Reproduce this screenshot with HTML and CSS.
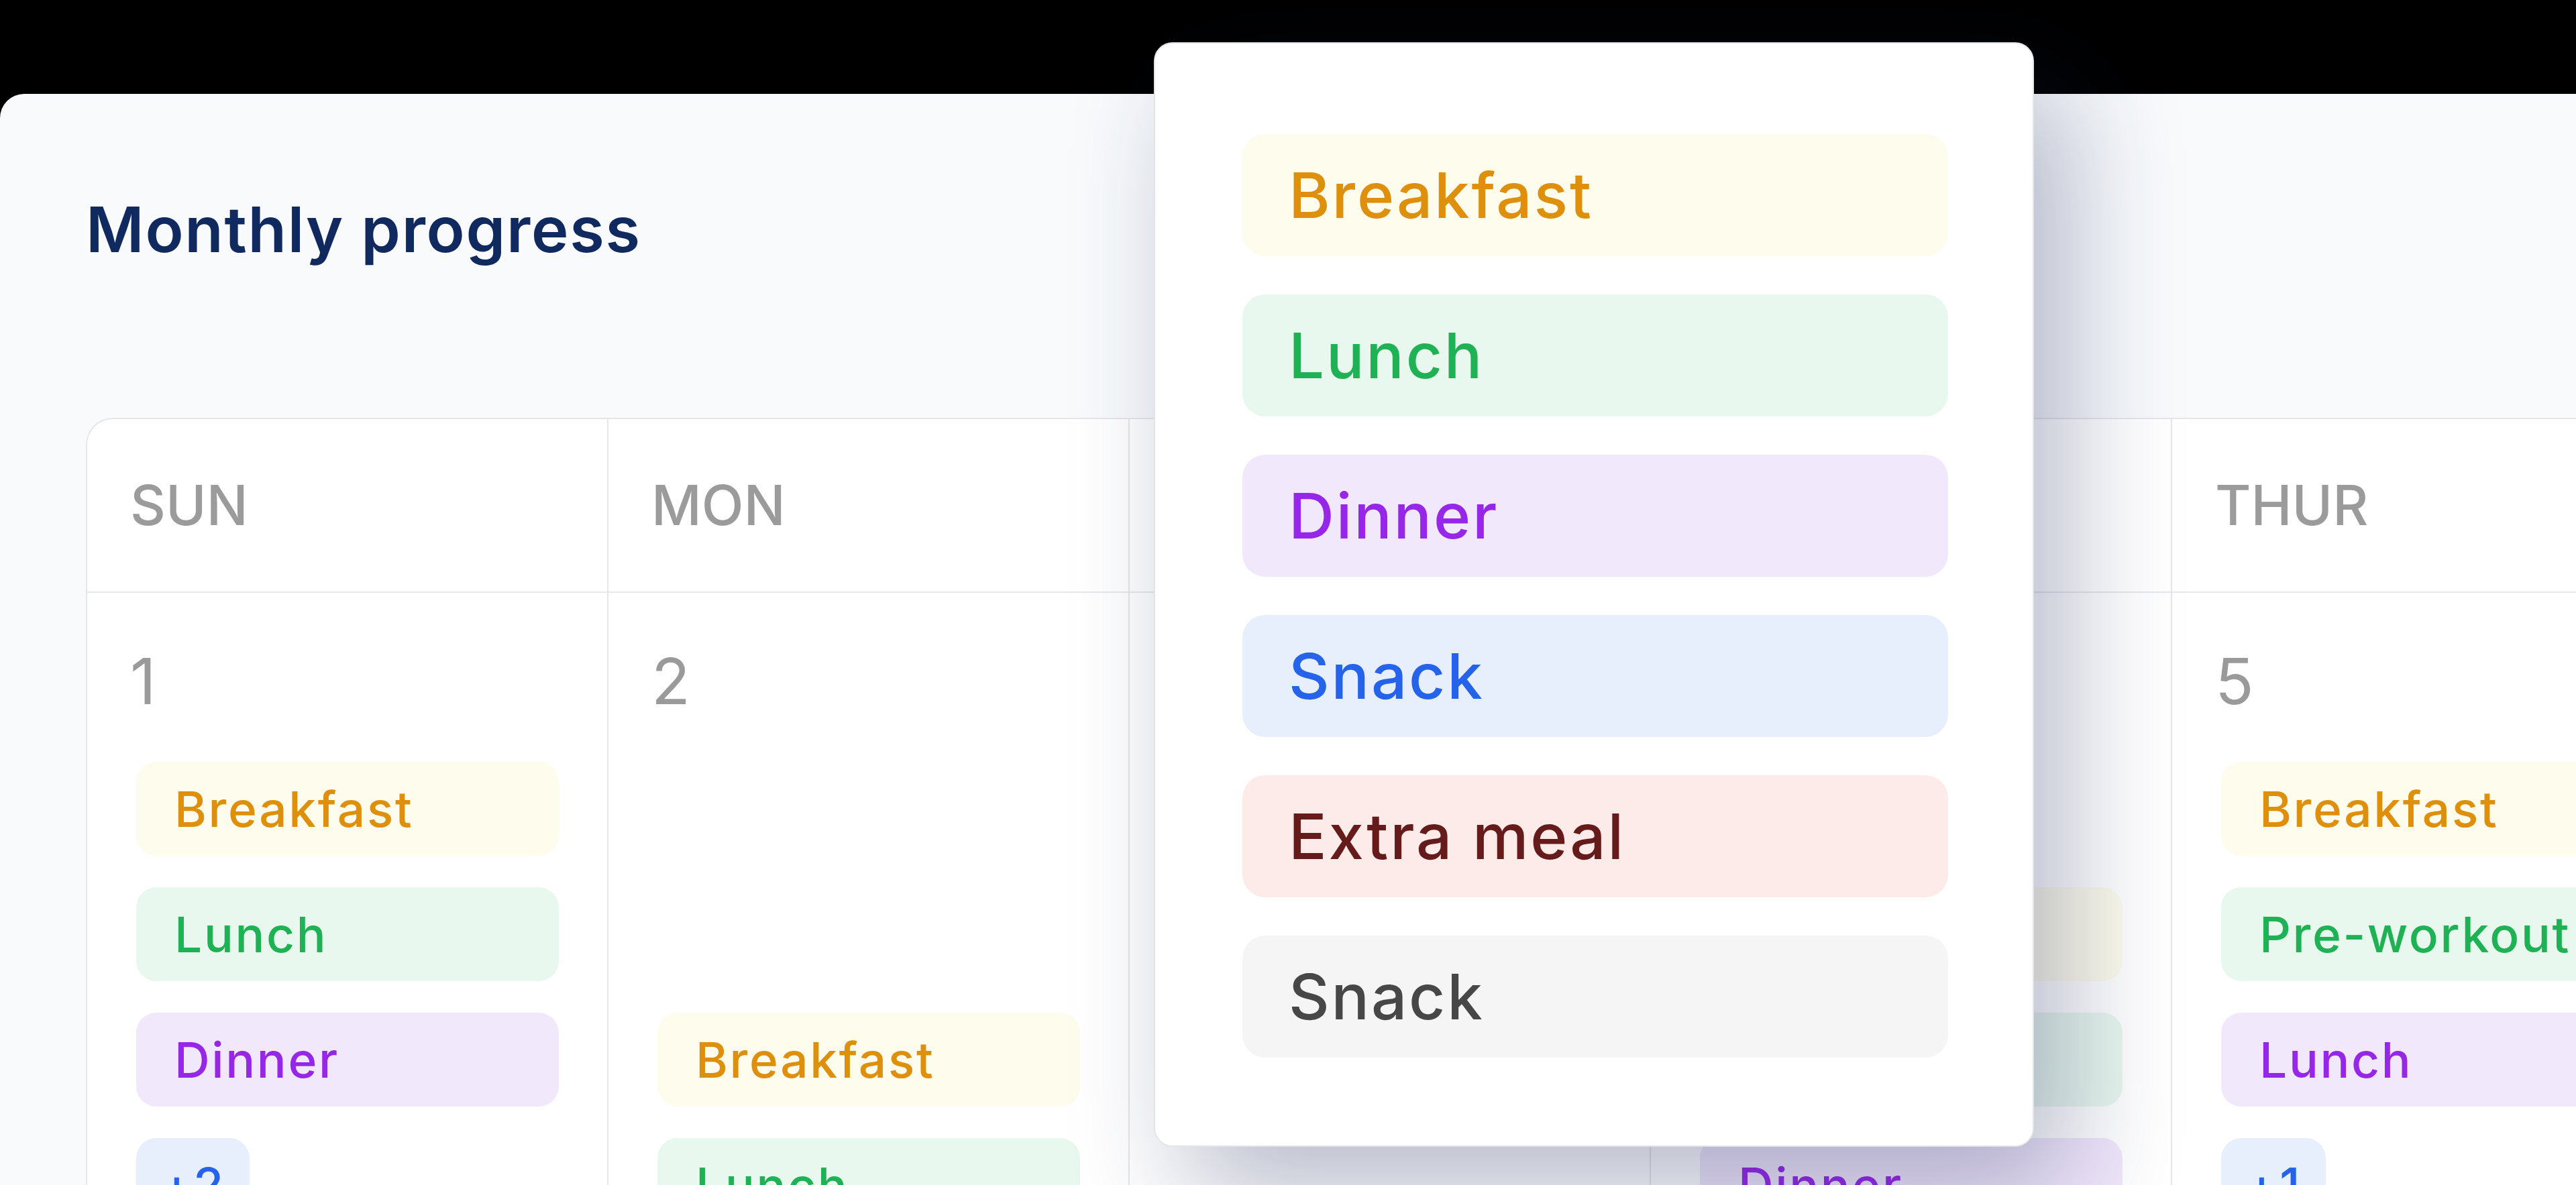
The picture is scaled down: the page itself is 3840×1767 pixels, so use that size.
FILE: index.html
```html
<!DOCTYPE html>
<html lang="en">
<head>
    <meta charset="UTF-8">
    <meta name="viewport" content="width=device-width, initial-scale=1.0">
    <title>Monthly progress</title>
    <link rel="stylesheet" href="styles.css">
</head>
<body>
    <main class="panel">
        <h1 class="panel-title">Monthly progress</h1>

        <div class="calendar">
            <div class="day">
                <div class="day-head">SUN</div>
                <div class="day-body">
                    <div class="day-num">1</div>
                    <div class="meals">
                        <span class="meal breakfast">Breakfast</span>
                        <span class="meal lunch">Lunch</span>
                        <span class="meal dinner">Dinner</span>
                        <span class="meal more">+2</span>
                    </div>
                </div>
            </div>
            <div class="day">
                <div class="day-head">MON</div>
                <div class="day-body">
                    <div class="day-num">2</div>
                    <div class="meals">
                        <span class="meal empty"></span>
                        <span class="meal empty"></span>
                        <span class="meal breakfast">Breakfast</span>
                        <span class="meal lunch">Lunch</span>
                    </div>
                </div>
            </div>
            <div class="day">
                <div class="day-head">TUE</div>
                <div class="day-body">
                    <div class="day-num">3</div>
                </div>
            </div>
            <div class="day">
                <div class="day-head">WED</div>
                <div class="day-body">
                    <div class="day-num">4</div>
                    <div class="meals">
                        <span class="meal empty"></span>
                        <span class="meal breakfast">Breakfast</span>
                        <span class="meal lunch">Lunch</span>
                        <span class="meal dinner">Dinner</span>
                    </div>
                </div>
            </div>
            <div class="day">
                <div class="day-head">THUR</div>
                <div class="day-body">
                    <div class="day-num">5</div>
                    <div class="meals">
                        <span class="meal breakfast">Breakfast</span>
                        <span class="meal lunch">Pre-workout</span>
                        <span class="meal dinner">Lunch</span>
                        <span class="meal more">+1</span>
                    </div>
                </div>
            </div>
            <div class="day">
                <div class="day-head">FRI</div>
                <div class="day-body">
                    <div class="day-num">6</div>
                </div>
            </div>
        </div>
    </main>

    <!-- meal type picker, opened over the calendar -->
    <div class="meal-picker">
        <div class="pick breakfast">Breakfast</div>
        <div class="pick lunch">Lunch</div>
        <div class="pick dinner">Dinner</div>
        <div class="pick snack">Snack</div>
        <div class="pick extra">Extra meal</div>
        <div class="pick plain">Snack</div>
    </div>
</body>
</html>
```

FILE: styles.css
```css
html, body {
    margin: 0;
    height: 1767px;
    overflow: hidden;
}

body {
    position: relative;
    box-sizing: border-box;
    padding-top: 140px;
    background-color: black;
    font-family: Inter, "Noto Sans", sans-serif;
}

.panel {
    height: 100%;
    box-sizing: border-box;
    padding: 155px 0 0 128px;
    background-color: #f8fafc;
    border-top-left-radius: 36px;
}

.panel-title {
    margin: 0;
    font-size: 94px;
    line-height: 94px;
    font-weight: 600;
    letter-spacing: 0.018em;
    color: #10295f;
}

.calendar {
    display: flex;
    width: max-content;
    margin-top: 234px;
    background-color: white;
    border-top: 2px solid #e6e7eb;
    border-left: 2px solid #e6e7eb;
    border-top-left-radius: 40px;
    overflow: hidden;
}

.day {
    flex: none;
    width: 775px;
    border-right: 2px solid #e6e7eb;
}

.day-head {
    display: flex;
    align-items: center;
    box-sizing: border-box;
    height: 259px;
    padding-left: 64px;
    border-bottom: 2px solid #e6e7eb;
    font-size: 82px;
    font-weight: 500;
    color: #9b9b9b;
}

.day-body {
    height: 1000px;
    padding: 84px 72px 0 64px;
}

.day-num {
    font-size: 95px;
    line-height: 95px;
    color: #9a9a9a;
}

.meals {
    display: flex;
    flex-direction: column;
    align-items: flex-start;
    gap: 47px;
    margin: 73px 0 0 9px;
}

.meal {
    display: flex;
    align-items: center;
    box-sizing: border-box;
    width: 630px;
    height: 140px;
    padding-left: 57px;
    border-radius: 30px;
    font-size: 73px;
    font-weight: 500;
    letter-spacing: 0.036em;
    white-space: nowrap;
}

.meal.empty {
    visibility: hidden;
}

.meal.more {
    width: auto;
    padding: 0 36px;
    background-color: #e8effc;
    color: #2563eb;
}

/* colours shared by calendar chips and picker rows */
.breakfast { background-color: #fefcec; color: #de8f0b; }
.lunch     { background-color: #e8f8ee; color: #1eb254; }
.dinner    { background-color: #f1e8fc; color: #9727e8; }
.snack     { background-color: #e8effc; color: #2563eb; }
.extra     { background-color: #fdebea; color: #661b1b; }
.plain     { background-color: #f5f5f5; color: #474747; }

.meal-picker {
    position: absolute;
    top: 63px;
    left: 1720px;
    width: 1312px;
    height: 1647px;
    box-sizing: border-box;
    padding: 135px 126px 0 130px;
    display: flex;
    flex-direction: column;
    gap: 57px;
    background-color: white;
    border: 2px solid #e4e5e9;
    border-radius: 28px;
    box-shadow: 50px 70px 170px rgba(30, 40, 90, 0.32);
}

.pick {
    display: flex;
    align-items: center;
    height: 182px;
    flex: none;
    padding-left: 69px;
    border-radius: 34px;
    font-size: 94px;
    font-weight: 500;
    letter-spacing: 0.03em;
}
```
